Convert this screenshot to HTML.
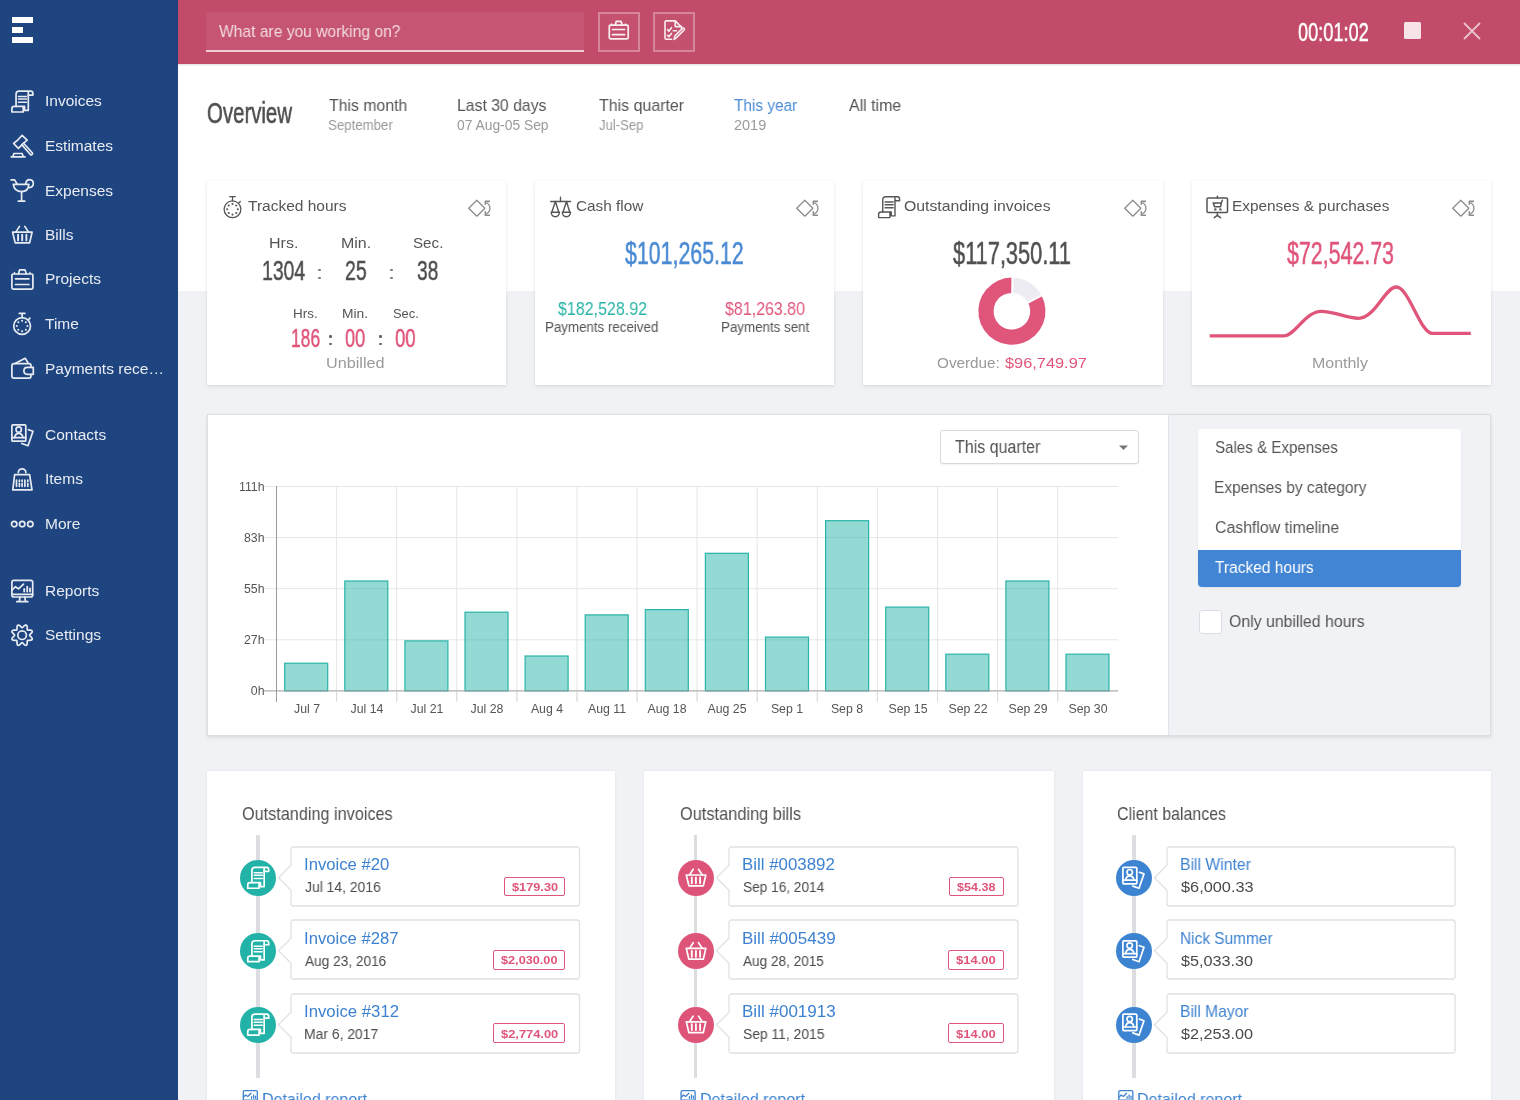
<!DOCTYPE html>
<html><head><meta charset="utf-8">
<style>
*{box-sizing:border-box;margin:0;padding:0}
html,body{width:1520px;height:1100px;overflow:hidden;background:#f1f2f6;font-family:"Liberation Sans",sans-serif}
.a{position:absolute}
.t{position:absolute;line-height:0;white-space:nowrap;transform-origin:0 0;will-change:transform}
svg{position:absolute;overflow:visible}
</style></head><body>
<div class="a" style="left:178px;top:64px;width:1342px;height:227px;background:#fff"></div>
<div class="a" style="left:0px;top:0px;width:178px;height:1100px;background:#1f4580"></div>
<div class="a" style="left:178px;top:0px;width:1342px;height:64px;background:#c24b6a;box-shadow:0 1px 2px rgba(0,0,0,0.15)"></div>
<div class="a" style="left:12px;top:17px;width:21px;height:6px;background:#fff"></div>
<div class="a" style="left:12px;top:27px;width:10.5px;height:6px;background:#fff"></div>
<div class="a" style="left:12px;top:37px;width:21px;height:6px;background:#fff"></div>
<div class="t" style="left:44.5px;top:101px;font-size:15.5px;color:#e8ecf2">Invoices</div>
<div class="t" style="left:44.5px;top:146px;font-size:15.5px;color:#e8ecf2">Estimates</div>
<div class="t" style="left:44.5px;top:191px;font-size:15.5px;color:#e8ecf2">Expenses</div>
<div class="t" style="left:44.5px;top:235px;font-size:15.5px;color:#e8ecf2">Bills</div>
<div class="t" style="left:44.5px;top:279px;font-size:15.5px;color:#e8ecf2">Projects</div>
<div class="t" style="left:44.5px;top:324px;font-size:15.5px;color:#e8ecf2">Time</div>
<div class="t" style="left:44.5px;top:369px;font-size:15.5px;color:#e8ecf2">Payments rece…</div>
<div class="t" style="left:44.5px;top:435px;font-size:15.5px;color:#e8ecf2">Contacts</div>
<div class="t" style="left:44.5px;top:479px;font-size:15.5px;color:#e8ecf2">Items</div>
<div class="t" style="left:44.5px;top:524px;font-size:15.5px;color:#e8ecf2">More</div>
<div class="t" style="left:44.5px;top:591px;font-size:15.5px;color:#e8ecf2">Reports</div>
<div class="t" style="left:44.5px;top:635px;font-size:15.5px;color:#e8ecf2">Settings</div>
<div class="a" style="left:206px;top:12px;width:378px;height:40px;background:rgba(255,255,255,0.06);border-bottom:2px solid rgba(255,255,255,0.7)"></div>
<div class="t" style="left:218.92px;top:32.00px;font-size:16.55px;color:rgba(255,255,255,0.78);transform:scaleX(0.9447);">What are you working on?</div>
<div class="a" style="left:598px;top:12px;width:42px;height:40px;border:2px solid rgba(255,255,255,0.3);background:rgba(255,255,255,0.04)"></div>
<div class="a" style="left:653px;top:12px;width:42px;height:40px;border:2px solid rgba(255,255,255,0.3);background:rgba(255,255,255,0.04)"></div>
<div class="t" style="left:1297.87px;top:32.00px;font-size:25.71px;color:#fff;transform:scaleX(0.7072);-webkit-text-stroke:0.5px currentColor;">00:01:02</div>
<div class="a" style="left:1404px;top:22px;width:17px;height:16.5px;background:#f7e4e9;border-radius:1.5px"></div>
<svg style="left:1463px;top:22px" width="18" height="18"><path d="M1 1L17 17M17 1L1 17" stroke="rgba(255,255,255,0.65)" stroke-width="1.9"/></svg>
<div class="t" style="left:207.38px;top:113.00px;font-size:29.52px;color:#505050;transform:scaleX(0.6907);-webkit-text-stroke:0.6px currentColor;">Overview</div>
<div class="t" style="left:328.68px;top:105.00px;font-size:16.38px;color:#555;transform:scaleX(0.9674);">This month</div>
<div class="t" style="left:328.40px;top:126.00px;font-size:13.71px;color:#9a9a9a;transform:scaleX(0.9662);">September</div>
<div class="t" style="left:456.54px;top:105.00px;font-size:16.38px;color:#555;transform:scaleX(0.9640);">Last 30 days</div>
<div class="t" style="left:457.25px;top:126.00px;font-size:13.71px;color:#9a9a9a;transform:scaleX(1.0098);">07 Aug-05 Sep</div>
<div class="t" style="left:598.68px;top:105.00px;font-size:16.38px;color:#555;transform:scaleX(0.9747);">This quarter</div>
<div class="t" style="left:598.80px;top:125.00px;font-size:13.91px;color:#9a9a9a;transform:scaleX(0.9397);">Jul-Sep</div>
<div class="t" style="left:734.49px;top:105.00px;font-size:16.38px;color:#4a8ad4;transform:scaleX(0.9395);">This year</div>
<div class="t" style="left:734.07px;top:126.00px;font-size:13.71px;color:#9a9a9a;transform:scaleX(1.0578);">2019</div>
<div class="t" style="left:849.00px;top:105.00px;font-size:16.38px;color:#555;transform:scaleX(0.9717);">All time</div>
<div class="a" style="left:206.9px;top:180.8px;width:299.2px;height:204.3px;background:#fff;box-shadow:0 2px 4px rgba(0,0,0,0.08),0 0 2px rgba(0,0,0,0.06)"></div>
<svg style="left:467px;top:199px" width="26" height="20" viewBox="0 0 26 20"><g fill="none" stroke="#8a8a8a" stroke-width="1.25" stroke-linejoin="round"><path d="M1.7 9.2L9.8 1.2L17.9 9.2L9.8 17.2Z"/><path d="M19.3 3.7C23.6 5.6 24.6 12 19.3 15"/><path d="M22.9 2.4H18.4V5.8M22.9 16.3H18.4V12.2" stroke-width="1.6"/></g></svg>
<div class="a" style="left:535.17px;top:180.8px;width:299.2px;height:204.3px;background:#fff;box-shadow:0 2px 4px rgba(0,0,0,0.08),0 0 2px rgba(0,0,0,0.06)"></div>
<svg style="left:795px;top:199px" width="26" height="20" viewBox="0 0 26 20"><g fill="none" stroke="#8a8a8a" stroke-width="1.25" stroke-linejoin="round"><path d="M1.7 9.2L9.8 1.2L17.9 9.2L9.8 17.2Z"/><path d="M19.3 3.7C23.6 5.6 24.6 12 19.3 15"/><path d="M22.9 2.4H18.4V5.8M22.9 16.3H18.4V12.2" stroke-width="1.6"/></g></svg>
<div class="a" style="left:863.4399999999999px;top:180.8px;width:299.2px;height:204.3px;background:#fff;box-shadow:0 2px 4px rgba(0,0,0,0.08),0 0 2px rgba(0,0,0,0.06)"></div>
<svg style="left:1123px;top:199px" width="26" height="20" viewBox="0 0 26 20"><g fill="none" stroke="#8a8a8a" stroke-width="1.25" stroke-linejoin="round"><path d="M1.7 9.2L9.8 1.2L17.9 9.2L9.8 17.2Z"/><path d="M19.3 3.7C23.6 5.6 24.6 12 19.3 15"/><path d="M22.9 2.4H18.4V5.8M22.9 16.3H18.4V12.2" stroke-width="1.6"/></g></svg>
<div class="a" style="left:1191.71px;top:180.8px;width:299.2px;height:204.3px;background:#fff;box-shadow:0 2px 4px rgba(0,0,0,0.08),0 0 2px rgba(0,0,0,0.06)"></div>
<svg style="left:1451px;top:199px" width="26" height="20" viewBox="0 0 26 20"><g fill="none" stroke="#8a8a8a" stroke-width="1.25" stroke-linejoin="round"><path d="M1.7 9.2L9.8 1.2L17.9 9.2L9.8 17.2Z"/><path d="M19.3 3.7C23.6 5.6 24.6 12 19.3 15"/><path d="M22.9 2.4H18.4V5.8M22.9 16.3H18.4V12.2" stroke-width="1.6"/></g></svg>
<div class="t" style="left:248.09px;top:206.00px;font-size:14.48px;color:#555;transform:scaleX(1.0708);">Tracked hours</div>
<div class="t" style="left:576.03px;top:206.00px;font-size:15.00px;color:#555;transform:scaleX(1.0234);">Cash flow</div>
<div class="t" style="left:904.09px;top:206.00px;font-size:15.00px;color:#555;transform:scaleX(1.0523);">Outstanding invoices</div>
<div class="t" style="left:1232.17px;top:206.00px;font-size:15.22px;color:#555;transform:scaleX(1.0109);">Expenses &amp; purchases</div>
<div class="t" style="left:268.52px;top:243.00px;font-size:15.22px;color:#555;transform:scaleX(1.0530);">Hrs.</div>
<div class="t" style="left:340.52px;top:243.00px;font-size:15.22px;color:#555;transform:scaleX(1.0499);">Min.</div>
<div class="t" style="left:412.92px;top:243.00px;font-size:15.00px;color:#555;transform:scaleX(1.0116);">Sec.</div>
<div class="t" style="left:262.15px;top:271.00px;font-size:28.14px;color:#4f4f4f;transform:scaleX(0.6889);-webkit-text-stroke:0.5px currentColor;">1304</div>
<div class="t" style="left:344.73px;top:271.00px;font-size:28.14px;color:#4f4f4f;transform:scaleX(0.6898);-webkit-text-stroke:0.5px currentColor;">25</div>
<div class="t" style="left:417.43px;top:271.00px;font-size:28.14px;color:#4f4f4f;transform:scaleX(0.6796);-webkit-text-stroke:0.5px currentColor;">38</div>
<div class="a" style="left:318.2px;top:268.5px;width:2.6px;height:2.6px;background:#777;border-radius:1px"></div>
<div class="a" style="left:318.2px;top:276.5px;width:2.6px;height:2.6px;background:#777;border-radius:1px"></div>
<div class="a" style="left:390.2px;top:268.5px;width:2.6px;height:2.6px;background:#777;border-radius:1px"></div>
<div class="a" style="left:390.2px;top:276.5px;width:2.6px;height:2.6px;background:#777;border-radius:1px"></div>
<div class="t" style="left:293.13px;top:314.00px;font-size:12.32px;color:#555;transform:scaleX(1.0905);">Hrs.</div>
<div class="t" style="left:342.49px;top:314.00px;font-size:12.32px;color:#555;transform:scaleX(1.1218);">Min.</div>
<div class="t" style="left:392.92px;top:314.00px;font-size:12.14px;color:#555;transform:scaleX(1.0642);">Sec.</div>
<div class="t" style="left:291.19px;top:338.00px;font-size:24.86px;color:#e0557a;transform:scaleX(0.7008);-webkit-text-stroke:0.5px currentColor;">186</div>
<div class="t" style="left:345.37px;top:338.00px;font-size:24.86px;color:#e0557a;transform:scaleX(0.7307);-webkit-text-stroke:0.5px currentColor;">00</div>
<div class="t" style="left:395.26px;top:338.00px;font-size:24.86px;color:#e0557a;transform:scaleX(0.7463);-webkit-text-stroke:0.5px currentColor;">00</div>
<div class="a" style="left:329.0px;top:335px;width:2.6px;height:2.6px;background:#666;border-radius:1px"></div>
<div class="a" style="left:329.0px;top:342.5px;width:2.6px;height:2.6px;background:#666;border-radius:1px"></div>
<div class="a" style="left:379.0px;top:335px;width:2.6px;height:2.6px;background:#666;border-radius:1px"></div>
<div class="a" style="left:379.0px;top:342.5px;width:2.6px;height:2.6px;background:#666;border-radius:1px"></div>
<div class="t" style="left:326.19px;top:363.00px;font-size:14.93px;color:#9a9a9a;transform:scaleX(1.0850);">Unbilled</div>
<div class="t" style="left:624.59px;top:253.00px;font-size:30.43px;color:#4a8ad4;transform:scaleX(0.7015);-webkit-text-stroke:0.5px currentColor;">$101,265.12</div>
<div class="t" style="left:558.14px;top:309.00px;font-size:17.71px;color:#26b3a6;transform:scaleX(0.9053);">$182,528.92</div>
<div class="t" style="left:545.33px;top:328.00px;font-size:13.77px;color:#555;transform:scaleX(0.9678);">Payments received</div>
<div class="t" style="left:725.24px;top:309.00px;font-size:17.71px;color:#e0557a;transform:scaleX(0.9037);">$81,263.80</div>
<div class="t" style="left:720.83px;top:328.00px;font-size:13.77px;color:#555;transform:scaleX(0.9695);">Payments sent</div>
<div class="t" style="left:952.98px;top:253.00px;font-size:30.43px;color:#505050;transform:scaleX(0.7156);-webkit-text-stroke:0.5px currentColor;">$117,350.11</div>
<div class="t" style="left:937.31px;top:363.00px;font-size:14.71px;color:#9a9a9a;transform:scaleX(1.0395);">Overdue:</div>
<div class="t" style="left:1004.54px;top:363.00px;font-size:14.71px;color:#e0557a;transform:scaleX(1.1118);">$96,749.97</div>
<svg style="left:0;top:0" width="1520" height="1100"><path d="M1011.90 277.60A33.6 33.6 0 0 1 1041.57 295.43L1028.06 302.61A18.3 18.3 0 0 0 1011.90 292.90Z" fill="#edecf2"/><path d="M1041.57 295.43A33.6 33.6 0 1 1 1011.90 277.60L1011.90 292.90A18.3 18.3 0 1 0 1028.06 302.61Z" fill="#e0557a"/><path d="M1012.16 296.20L1012.53 275.21" stroke="#fff" stroke-width="2"/><path d="M1025.14 304.16L1043.69 294.30" stroke="#fff" stroke-width="2"/></svg>
<div class="t" style="left:1287.09px;top:253.00px;font-size:30.43px;color:#e0557a;transform:scaleX(0.7030);-webkit-text-stroke:0.5px currentColor;">$72,542.73</div>
<svg style="left:0;top:0" width="1520" height="1100"><path d="M1209.7 335.9L1283.8 335.9C1295 335.9 1305 311.3 1321.3 311.3C1335 311.3 1346 318.3 1358.5 318.3C1375 318.3 1385 287 1396.2 287C1409 287 1420 333.4 1432.5 333.4L1470.8 333.4" fill="none" stroke="#e0557a" stroke-width="3.3"/></svg>
<div class="t" style="left:1311.72px;top:363.00px;font-size:14.93px;color:#9a9a9a;transform:scaleX(1.0695);">Monthly</div>
<div class="a" style="left:207px;top:414px;width:1283.5px;height:322px;background:#fff;box-shadow:0 2px 4px rgba(0,0,0,0.08),0 0 3px rgba(0,0,0,0.05);border:1px solid #dcdfe2"></div>
<div class="a" style="left:1168px;top:415px;width:321.5px;height:320px;background:#f1f2f6;border-left:1px solid #e1e3e8"></div>
<svg style="left:0;top:0" width="1520" height="1100"><path d="M264 486.5H1118" stroke="#e6e6e6" stroke-width="1"/><path d="M264 537.6H1118" stroke="#e6e6e6" stroke-width="1"/><path d="M264 588.7H1118" stroke="#e6e6e6" stroke-width="1"/><path d="M264 639.8H1118" stroke="#e6e6e6" stroke-width="1"/><path d="M336.6 486V701" stroke="#e6e6e6" stroke-width="1"/><path d="M396.7 486V701" stroke="#e6e6e6" stroke-width="1"/><path d="M456.8 486V701" stroke="#e6e6e6" stroke-width="1"/><path d="M516.9 486V701" stroke="#e6e6e6" stroke-width="1"/><path d="M577.0 486V701" stroke="#e6e6e6" stroke-width="1"/><path d="M637.1 486V701" stroke="#e6e6e6" stroke-width="1"/><path d="M697.1 486V701" stroke="#e6e6e6" stroke-width="1"/><path d="M757.2 486V701" stroke="#e6e6e6" stroke-width="1"/><path d="M817.3 486V701" stroke="#e6e6e6" stroke-width="1"/><path d="M877.4 486V701" stroke="#e6e6e6" stroke-width="1"/><path d="M937.5 486V701" stroke="#e6e6e6" stroke-width="1"/><path d="M997.6 486V701" stroke="#e6e6e6" stroke-width="1"/><path d="M1057.7 486V701" stroke="#e6e6e6" stroke-width="1"/><rect x="284.7" y="663.2" width="43" height="27.7" fill="rgba(38,181,168,0.5)" stroke="#2ab4a8" stroke-width="1.2"/><rect x="344.8" y="581.0" width="43" height="109.9" fill="rgba(38,181,168,0.5)" stroke="#2ab4a8" stroke-width="1.2"/><rect x="404.9" y="640.9" width="43" height="50.0" fill="rgba(38,181,168,0.5)" stroke="#2ab4a8" stroke-width="1.2"/><rect x="465.0" y="612.2" width="43" height="78.7" fill="rgba(38,181,168,0.5)" stroke="#2ab4a8" stroke-width="1.2"/><rect x="525.1" y="656.0" width="43" height="34.9" fill="rgba(38,181,168,0.5)" stroke="#2ab4a8" stroke-width="1.2"/><rect x="585.2" y="614.9" width="43" height="76.0" fill="rgba(38,181,168,0.5)" stroke="#2ab4a8" stroke-width="1.2"/><rect x="645.3" y="609.6" width="43" height="81.3" fill="rgba(38,181,168,0.5)" stroke="#2ab4a8" stroke-width="1.2"/><rect x="705.4" y="553.3" width="43" height="137.6" fill="rgba(38,181,168,0.5)" stroke="#2ab4a8" stroke-width="1.2"/><rect x="765.5" y="637.1" width="43" height="53.8" fill="rgba(38,181,168,0.5)" stroke="#2ab4a8" stroke-width="1.2"/><rect x="825.6" y="520.7" width="43" height="170.2" fill="rgba(38,181,168,0.5)" stroke="#2ab4a8" stroke-width="1.2"/><rect x="885.7" y="607.1" width="43" height="83.8" fill="rgba(38,181,168,0.5)" stroke="#2ab4a8" stroke-width="1.2"/><rect x="945.8" y="654.2" width="43" height="36.7" fill="rgba(38,181,168,0.5)" stroke="#2ab4a8" stroke-width="1.2"/><rect x="1005.9" y="581.0" width="43" height="109.9" fill="rgba(38,181,168,0.5)" stroke="#2ab4a8" stroke-width="1.2"/><rect x="1066.0" y="654.2" width="43" height="36.7" fill="rgba(38,181,168,0.5)" stroke="#2ab4a8" stroke-width="1.2"/><path d="M264 690.9H1118" stroke="#9a9a9a" stroke-width="1"/><path d="M276.5 486V702" stroke="#9a9a9a" stroke-width="1"/><path d="M336.6 691V702" stroke="#dadada" stroke-width="1"/><path d="M396.7 691V702" stroke="#dadada" stroke-width="1"/><path d="M456.8 691V702" stroke="#dadada" stroke-width="1"/><path d="M516.9 691V702" stroke="#dadada" stroke-width="1"/><path d="M577.0 691V702" stroke="#dadada" stroke-width="1"/><path d="M637.1 691V702" stroke="#dadada" stroke-width="1"/><path d="M697.1 691V702" stroke="#dadada" stroke-width="1"/><path d="M757.2 691V702" stroke="#dadada" stroke-width="1"/><path d="M817.3 691V702" stroke="#dadada" stroke-width="1"/><path d="M877.4 691V702" stroke="#dadada" stroke-width="1"/><path d="M937.5 691V702" stroke="#dadada" stroke-width="1"/><path d="M997.6 691V702" stroke="#dadada" stroke-width="1"/><path d="M1057.7 691V702" stroke="#dadada" stroke-width="1"/></svg>
<div class="t" style="left:246.5px;width:120px;text-align:center;top:709px;font-size:12.3px;color:#555">Jul 7</div>
<div class="t" style="left:306.6px;width:120px;text-align:center;top:709px;font-size:12.3px;color:#555">Jul 14</div>
<div class="t" style="left:366.7px;width:120px;text-align:center;top:709px;font-size:12.3px;color:#555">Jul 21</div>
<div class="t" style="left:426.8px;width:120px;text-align:center;top:709px;font-size:12.3px;color:#555">Jul 28</div>
<div class="t" style="left:486.9px;width:120px;text-align:center;top:709px;font-size:12.3px;color:#555">Aug 4</div>
<div class="t" style="left:547.0px;width:120px;text-align:center;top:709px;font-size:12.3px;color:#555">Aug 11</div>
<div class="t" style="left:607.1px;width:120px;text-align:center;top:709px;font-size:12.3px;color:#555">Aug 18</div>
<div class="t" style="left:667.2px;width:120px;text-align:center;top:709px;font-size:12.3px;color:#555">Aug 25</div>
<div class="t" style="left:727.3px;width:120px;text-align:center;top:709px;font-size:12.3px;color:#555">Sep 1</div>
<div class="t" style="left:787.4px;width:120px;text-align:center;top:709px;font-size:12.3px;color:#555">Sep 8</div>
<div class="t" style="left:847.5px;width:120px;text-align:center;top:709px;font-size:12.3px;color:#555">Sep 15</div>
<div class="t" style="left:907.6px;width:120px;text-align:center;top:709px;font-size:12.3px;color:#555">Sep 22</div>
<div class="t" style="left:967.7px;width:120px;text-align:center;top:709px;font-size:12.3px;color:#555">Sep 29</div>
<div class="t" style="left:1027.8px;width:120px;text-align:center;top:709px;font-size:12.3px;color:#555">Sep 30</div>
<div class="t" style="left:200px;width:64.5px;text-align:right;top:487px;font-size:12.3px;color:#555">111h</div>
<div class="t" style="left:200px;width:64.5px;text-align:right;top:538px;font-size:12.3px;color:#555">83h</div>
<div class="t" style="left:200px;width:64.5px;text-align:right;top:589px;font-size:12.3px;color:#555">55h</div>
<div class="t" style="left:200px;width:64.5px;text-align:right;top:640px;font-size:12.3px;color:#555">27h</div>
<div class="t" style="left:200px;width:64.5px;text-align:right;top:691px;font-size:12.3px;color:#555">0h</div>
<div class="a" style="left:939.8px;top:429.8px;width:199px;height:34.2px;border:1.5px solid #d9d9d9;border-radius:3px;background:#fff;box-shadow:0 1px 1px rgba(0,0,0,0.05)"></div>
<div class="t" style="left:954.68px;top:447.00px;font-size:18.70px;color:#555;transform:scaleX(0.8558);">This quarter</div>
<svg style="left:1119px;top:445px" width="10" height="6"><path d="M0 0.5L4.5 5L9 0.5Z" fill="#777"/></svg>
<div class="a" style="left:1198px;top:429.2px;width:263px;height:157.6px;background:#fff;border-radius:4px;box-shadow:0 1px 2px rgba(0,0,0,0.08);overflow:hidden"></div>
<div class="a" style="left:1198px;top:549.7px;width:263px;height:37.1px;background:#4285d4;border-radius:0 0 4px 4px"></div>
<div class="t" style="left:1214.82px;top:448.00px;font-size:17.00px;color:#555;transform:scaleX(0.8895);">Sales &amp; Expenses</div>
<div class="t" style="left:1214.26px;top:488.00px;font-size:17.10px;color:#555;transform:scaleX(0.9059);">Expenses by category</div>
<div class="t" style="left:1214.71px;top:528.00px;font-size:16.86px;color:#555;transform:scaleX(0.9404);">Cashflow timeline</div>
<div class="t" style="left:1215.19px;top:568.00px;font-size:17.10px;color:#fff;transform:scaleX(0.9087);">Tracked hours</div>
<div class="a" style="left:1198.7px;top:610px;width:23.6px;height:23.6px;background:#fff;border:1px solid #dcdde2;border-radius:3px"></div>
<div class="t" style="left:1229.29px;top:622.00px;font-size:17.00px;color:#555;transform:scaleX(0.9323);">Only unbilled hours</div>
<div class="a" style="left:207px;top:771px;width:408px;height:340px;background:#fff;box-shadow:0 0 3px rgba(0,0,0,0.07)"></div>
<div class="a" style="left:644px;top:771px;width:410px;height:340px;background:#fff;box-shadow:0 0 3px rgba(0,0,0,0.07)"></div>
<div class="a" style="left:1083px;top:771px;width:408px;height:340px;background:#fff;box-shadow:0 0 3px rgba(0,0,0,0.07)"></div>
<div class="t" style="left:241.87px;top:814.00px;font-size:17.71px;color:#505050;transform:scaleX(0.9175);">Outstanding invoices</div>
<div class="t" style="left:680.06px;top:814.00px;font-size:17.71px;color:#505050;transform:scaleX(0.9253);">Outstanding bills</div>
<div class="t" style="left:1117.20px;top:814.00px;font-size:17.71px;color:#505050;transform:scaleX(0.9017);">Client balances</div>
<div class="a" style="left:256.1px;top:835px;width:3.8px;height:243px;background:#dcdde1"></div>
<svg style="left:275px;top:845.9px" width="306.5" height="62"><path d="M16 3.5Q16 1 18.5 1H302.0Q304.5 1 304.5 3.5V57.5Q304.5 60 302.0 60H18.5Q16 60 16 57.5V44.2L3.5 31.7L16 19.2Z" fill="#fff" stroke="#e0e1e5" stroke-width="1.3"/></svg>
<div class="a" style="left:240.10000000000002px;top:859.7px;width:36px;height:36px;border-radius:50%;background:#22b2a7"></div>
<svg style="left:275px;top:919.3px" width="306.5" height="62"><path d="M16 3.5Q16 1 18.5 1H302.0Q304.5 1 304.5 3.5V57.5Q304.5 60 302.0 60H18.5Q16 60 16 57.5V44.2L3.5 31.7L16 19.2Z" fill="#fff" stroke="#e0e1e5" stroke-width="1.3"/></svg>
<div class="a" style="left:240.10000000000002px;top:933.1px;width:36px;height:36px;border-radius:50%;background:#22b2a7"></div>
<svg style="left:275px;top:992.7px" width="306.5" height="62"><path d="M16 3.5Q16 1 18.5 1H302.0Q304.5 1 304.5 3.5V57.5Q304.5 60 302.0 60H18.5Q16 60 16 57.5V44.2L3.5 31.7L16 19.2Z" fill="#fff" stroke="#e0e1e5" stroke-width="1.3"/></svg>
<div class="a" style="left:240.10000000000002px;top:1006.5px;width:36px;height:36px;border-radius:50%;background:#22b2a7"></div>
<div class="a" style="left:693.6px;top:835px;width:3.8px;height:243px;background:#dcdde1"></div>
<svg style="left:712.6px;top:845.9px" width="306.9" height="62"><path d="M16 3.5Q16 1 18.5 1H302.4Q304.9 1 304.9 3.5V57.5Q304.9 60 302.4 60H18.5Q16 60 16 57.5V44.2L3.5 31.7L16 19.2Z" fill="#fff" stroke="#e0e1e5" stroke-width="1.3"/></svg>
<div class="a" style="left:677.6px;top:859.7px;width:36px;height:36px;border-radius:50%;background:#de5479"></div>
<svg style="left:712.6px;top:919.3px" width="306.9" height="62"><path d="M16 3.5Q16 1 18.5 1H302.4Q304.9 1 304.9 3.5V57.5Q304.9 60 302.4 60H18.5Q16 60 16 57.5V44.2L3.5 31.7L16 19.2Z" fill="#fff" stroke="#e0e1e5" stroke-width="1.3"/></svg>
<div class="a" style="left:677.6px;top:933.1px;width:36px;height:36px;border-radius:50%;background:#de5479"></div>
<svg style="left:712.6px;top:992.7px" width="306.9" height="62"><path d="M16 3.5Q16 1 18.5 1H302.4Q304.9 1 304.9 3.5V57.5Q304.9 60 302.4 60H18.5Q16 60 16 57.5V44.2L3.5 31.7L16 19.2Z" fill="#fff" stroke="#e0e1e5" stroke-width="1.3"/></svg>
<div class="a" style="left:677.6px;top:1006.5px;width:36px;height:36px;border-radius:50%;background:#de5479"></div>
<div class="a" style="left:1132px;top:835px;width:3.8px;height:243px;background:#dcdde1"></div>
<svg style="left:1150.6px;top:845.9px" width="306.10000000000014" height="62"><path d="M16 3.5Q16 1 18.5 1H301.60000000000014Q304.10000000000014 1 304.10000000000014 3.5V57.5Q304.10000000000014 60 301.60000000000014 60H18.5Q16 60 16 57.5V44.2L3.5 31.7L16 19.2Z" fill="#fff" stroke="#e0e1e5" stroke-width="1.3"/></svg>
<div class="a" style="left:1116px;top:859.7px;width:36px;height:36px;border-radius:50%;background:#3c84d2"></div>
<svg style="left:1150.6px;top:919.3px" width="306.10000000000014" height="62"><path d="M16 3.5Q16 1 18.5 1H301.60000000000014Q304.10000000000014 1 304.10000000000014 3.5V57.5Q304.10000000000014 60 301.60000000000014 60H18.5Q16 60 16 57.5V44.2L3.5 31.7L16 19.2Z" fill="#fff" stroke="#e0e1e5" stroke-width="1.3"/></svg>
<div class="a" style="left:1116px;top:933.1px;width:36px;height:36px;border-radius:50%;background:#3c84d2"></div>
<svg style="left:1150.6px;top:992.7px" width="306.10000000000014" height="62"><path d="M16 3.5Q16 1 18.5 1H301.60000000000014Q304.10000000000014 1 304.10000000000014 3.5V57.5Q304.10000000000014 60 301.60000000000014 60H18.5Q16 60 16 57.5V44.2L3.5 31.7L16 19.2Z" fill="#fff" stroke="#e0e1e5" stroke-width="1.3"/></svg>
<div class="a" style="left:1116px;top:1006.5px;width:36px;height:36px;border-radius:50%;background:#3c84d2"></div>
<div class="t" style="left:303.90px;top:864.00px;font-size:16.38px;color:#3d82d0;transform:scaleX(1.0193);">Invoice #20</div>
<div class="t" style="left:305.19px;top:887.00px;font-size:14.35px;color:#4a4a4a;transform:scaleX(0.9689);">Jul 14, 2016</div>
<div class="a" style="left:504.1px;top:876.6px;width:60.60000000000002px;height:19.7px;border:1.3px solid #e0557a;border-radius:2px"></div>
<div class="t" style="left:511.81px;top:887.00px;font-size:11.57px;color:#e0557a;font-weight:bold;transform:scaleX(1.1021);">$179.30</div>
<div class="t" style="left:303.90px;top:938.00px;font-size:16.38px;color:#3d82d0;transform:scaleX(1.0181);">Invoice #287</div>
<div class="t" style="left:305.40px;top:961.00px;font-size:14.35px;color:#4a4a4a;transform:scaleX(0.9517);">Aug 23, 2016</div>
<div class="a" style="left:493.3px;top:950.0px;width:71.40000000000003px;height:19.7px;border:1.3px solid #e0557a;border-radius:2px"></div>
<div class="t" style="left:501.41px;top:960.00px;font-size:11.57px;color:#e0557a;font-weight:bold;transform:scaleX(1.0972);">$2,030.00</div>
<div class="t" style="left:303.89px;top:1011.00px;font-size:16.38px;color:#3d82d0;transform:scaleX(1.0247);">Invoice #312</div>
<div class="t" style="left:304.29px;top:1034.00px;font-size:14.35px;color:#4a4a4a;transform:scaleX(0.9695);">Mar 6, 2017</div>
<div class="a" style="left:493.3px;top:1023.4000000000001px;width:71.40000000000003px;height:19.7px;border:1.3px solid #e0557a;border-radius:2px"></div>
<div class="t" style="left:500.61px;top:1034.00px;font-size:11.57px;color:#e0557a;font-weight:bold;transform:scaleX(1.1129);">$2,774.00</div>
<div class="t" style="left:742.05px;top:864.00px;font-size:16.38px;color:#3d82d0;transform:scaleX(1.0315);">Bill #003892</div>
<div class="t" style="left:742.78px;top:887.00px;font-size:14.14px;color:#4a4a4a;transform:scaleX(0.9664);">Sep 16, 2014</div>
<div class="a" style="left:949px;top:876.6px;width:54.700000000000045px;height:19.7px;border:1.3px solid #e0557a;border-radius:2px"></div>
<div class="t" style="left:957.31px;top:887.00px;font-size:11.57px;color:#e0557a;font-weight:bold;transform:scaleX(1.0863);">$54.38</div>
<div class="t" style="left:742.04px;top:938.00px;font-size:16.38px;color:#3d82d0;transform:scaleX(1.0396);">Bill #005439</div>
<div class="t" style="left:743.40px;top:961.00px;font-size:14.35px;color:#4a4a4a;transform:scaleX(0.9470);">Aug 28, 2015</div>
<div class="a" style="left:948px;top:950.0px;width:55.700000000000045px;height:19.7px;border:1.3px solid #e0557a;border-radius:2px"></div>
<div class="t" style="left:956.10px;top:960.00px;font-size:11.57px;color:#e0557a;font-weight:bold;transform:scaleX(1.1245);">$14.00</div>
<div class="t" style="left:742.04px;top:1011.00px;font-size:16.38px;color:#3d82d0;transform:scaleX(1.0409);">Bill #001913</div>
<div class="t" style="left:742.78px;top:1034.00px;font-size:14.14px;color:#4a4a4a;transform:scaleX(0.9806);">Sep 11, 2015</div>
<div class="a" style="left:948px;top:1023.4000000000001px;width:55.700000000000045px;height:19.7px;border:1.3px solid #e0557a;border-radius:2px"></div>
<div class="t" style="left:956.10px;top:1034.00px;font-size:11.57px;color:#e0557a;font-weight:bold;transform:scaleX(1.1245);">$14.00</div>
<div class="t" style="left:1180.14px;top:864.00px;font-size:16.38px;color:#3d82d0;transform:scaleX(0.9634);">Bill Winter</div>
<div class="t" style="left:1181.24px;top:887.00px;font-size:15.29px;color:#4a4a4a;transform:scaleX(1.0675);">$6,000.33</div>
<div class="t" style="left:1180.16px;top:938.00px;font-size:16.38px;color:#3d82d0;transform:scaleX(0.9431);">Nick Summer</div>
<div class="t" style="left:1181.24px;top:961.00px;font-size:15.29px;color:#4a4a4a;transform:scaleX(1.0604);">$5,033.30</div>
<div class="t" style="left:1180.15px;top:1011.00px;font-size:16.38px;color:#3d82d0;transform:scaleX(0.9551);">Bill Mayor</div>
<div class="t" style="left:1181.24px;top:1034.00px;font-size:15.29px;color:#4a4a4a;transform:scaleX(1.0604);">$2,253.00</div>
<div class="t" style="left:261.82px;top:1099.00px;font-size:16.38px;color:#3d82d0;transform:scaleX(0.9787);">Detailed report</div>
<div class="t" style="left:699.72px;top:1099.00px;font-size:16.38px;color:#3d82d0;transform:scaleX(0.9787);">Detailed report</div>
<div class="t" style="left:1137.32px;top:1099.00px;font-size:16.38px;color:#3d82d0;transform:scaleX(0.9787);">Detailed report</div>
<svg style="left:0;top:0" width="1520" height="1100"><g transform="translate(6 84) scale(1)" style="color:#e8ecf2" fill="none" stroke="#e8ecf2" stroke-width="1.70" stroke-linecap="round" stroke-linejoin="round"><path d="M10.05 22.4V10.3Q10.05 7.1 13.2 7.1H24.8Q26.9 7.1 26.9 9.6V11.1H22.3"/><path d="M22.3 8V26.3H18.6V22.4H8.2Q5.9 22.4 5.9 24.7V28H17.2V22.6"/><path d="M12.4 12.5H20.4M12.4 15.1H20.4M12.4 18.2H20.4" stroke-width="1.5"/></g><g transform="translate(6 128) scale(1)" style="color:#e8ecf2" fill="none" stroke="#e8ecf2" stroke-width="1.70" stroke-linecap="round" stroke-linejoin="round"><path d="M16.1 7.3L21.2 12.2L17.6 15.2L12.4 20.3L7.6 15.5L11.6 12.2Z"/><path d="M15.7 16.6L24.4 26.5Q25.3 27.3 26.2 26.4Q27 25.5 26.2 24.7L17.6 15.2"/><path d="M5.2 28.8H19M7 28.6L7.9 25.5H16.1L17.2 28.6"/></g><g transform="translate(6 172) scale(1)" style="color:#e8ecf2" fill="none" stroke="#e8ecf2" stroke-width="1.70" stroke-linecap="round" stroke-linejoin="round"><path d="M7.3 12.4H22.9Q22.3 19.6 15.6 19.7Q8.3 19.6 7.3 12.4Z"/><path d="M15.6 19.7V29.1M12.3 29.1H18.8"/><path d="M5.1 7.9H8.6L11.2 12.3"/><path d="M19.6 12.2Q20.2 7.6 23.5 7.6Q27.3 7.8 27.3 11.5Q27.2 15.1 23.4 15.6"/></g><g transform="translate(6 216) scale(1)" style="color:#e8ecf2" fill="none" stroke="#e8ecf2" stroke-width="1.70" stroke-linecap="round" stroke-linejoin="round"><path d="M6.6 16.1H26.1L23.6 26.9H9.2Z" stroke-linejoin="round"/><path d="M9.8 16.1L13.5 10.4M22.6 16.1L18.8 10.4"/><path d="M12.1 18.6V24.4M16.2 18.6V24.4M20.4 18.6V24.4" stroke-width="1.9"/></g><g transform="translate(6 261) scale(1)" style="color:#e8ecf2" fill="none" stroke="#e8ecf2" stroke-width="1.70" stroke-linecap="round" stroke-linejoin="round"><rect x="5.9" y="13" width="21" height="15.1" rx="1.3"/><path d="M12.4 13L13.6 8.8H19L20.4 13"/><path d="M9.5 17.8H22.9M9.5 23.5H22.9"/><path d="M8.5 12.6V11.5M23.9 12.6V11.5" stroke-width="1.4"/></g><g transform="translate(6 305) scale(1)" style="color:#e8ecf2" fill="none" stroke="#e8ecf2" stroke-width="1.70" stroke-linecap="round" stroke-linejoin="round"><circle cx="16.1" cy="21" r="8.4"/><path d="M16.1 12.6V8.5M13.3 8.4H18.9M22.3 14.8L23.9 13.2"/><circle cx="16.10" cy="15.70" r="1.05" fill="currentColor" stroke="none"/><circle cx="19.85" cy="17.25" r="1.05" fill="currentColor" stroke="none"/><circle cx="21.40" cy="21.00" r="1.05" fill="currentColor" stroke="none"/><circle cx="19.85" cy="24.75" r="1.05" fill="currentColor" stroke="none"/><circle cx="16.10" cy="26.30" r="1.05" fill="currentColor" stroke="none"/><circle cx="12.35" cy="24.75" r="1.05" fill="currentColor" stroke="none"/><circle cx="10.80" cy="21.00" r="1.05" fill="currentColor" stroke="none"/><circle cx="12.35" cy="17.25" r="1.05" fill="currentColor" stroke="none"/></g><g transform="translate(6 350) scale(1)" style="color:#e8ecf2" fill="none" stroke="#e8ecf2" stroke-width="1.70" stroke-linecap="round" stroke-linejoin="round"><path d="M25 17.3V15.6Q25 13.6 23 13.6H8Q5.9 13.6 5.9 15.7V26Q5.9 28.1 8 28.1H23Q25 28.1 25 26V24.3"/><path d="M27.3 17.3H21.3Q17.9 17.3 17.9 20.8Q17.9 24.3 21.3 24.3H27.3Z"/><path d="M9 13.5L19.2 8.3L22.4 13.4"/></g><g transform="translate(6 416) scale(1)" style="color:#e8ecf2" fill="none" stroke="#e8ecf2" stroke-width="1.70" stroke-linecap="round" stroke-linejoin="round"><rect x="5.9" y="8.8" width="13.9" height="16.4" rx="1"/><path d="M5.9 21.6H19.8"/><circle cx="12.7" cy="13.6" r="2.7"/><path d="M8.6 21.6Q9.2 17.3 12.7 17.3Q16.3 17.3 16.9 21.6"/><path d="M22.4 13.7L27 15.3L22 29.7L15.8 27.5"/></g><g transform="translate(6 461) scale(1)" style="color:#e8ecf2" fill="none" stroke="#e8ecf2" stroke-width="1.70" stroke-linecap="round" stroke-linejoin="round"><path d="M12.3 11.6A3.8 3.8 0 0 1 19.9 11.6"/><path d="M8.6 13.6H23.6L26 28.9H6.8Z" stroke-linejoin="round"/><path d="M10.5 19.2V25.3M13.4 19.2V20.6M13.4 22.5V25.3M16.1 19.2V20.6M16.1 22.5V25.3M18.9 19.2V25.3M21.8 19.2V20.6M21.8 22.5V25.3" stroke-width="1.7"/></g><g transform="translate(6 506) scale(1)" style="color:#e8ecf2" fill="none" stroke="#e8ecf2" stroke-width="1.70" stroke-linecap="round" stroke-linejoin="round"><circle cx="8.2" cy="18.1" r="2.7"/><circle cx="16.2" cy="18.1" r="2.7"/><circle cx="24.3" cy="18.1" r="2.7"/></g><g transform="translate(6 572) scale(1)" style="color:#e8ecf2" fill="none" stroke="#e8ecf2" stroke-width="1.70" stroke-linecap="round" stroke-linejoin="round"><rect x="5.9" y="8.3" width="20.8" height="16.7" rx="2"/><path d="M5.9 22.3H26.7"/><path d="M14 25L13.3 29.5M18.8 25L19.5 29.5M10.8 29.7H21.8"/><path d="M6.5 17.8L9.3 14.7L12.5 16.8L17.5 12.2"/><path d="M18.2 17V19.6M21.2 14.6V19.6M24 16.3V19.6" stroke-width="1.8"/></g><g transform="translate(6 617) scale(1)" style="color:#e8ecf2" fill="none" stroke="#e8ecf2" stroke-width="1.70" stroke-linecap="round" stroke-linejoin="round"><path d="M16.10 10.70 L16.61 10.49 L17.19 9.92 L17.89 9.18 L18.70 8.49 L19.53 8.09 L20.27 8.13 L20.82 8.63 L21.12 9.50 L21.21 10.55 L21.18 11.58 L21.20 12.39 L21.40 12.90 L21.91 13.10 L22.72 13.12 L23.75 13.09 L24.80 13.17 L25.67 13.48 L26.17 14.03 L26.21 14.77 L25.81 15.60 L25.12 16.41 L24.38 17.11 L23.81 17.69 L23.60 18.20 L23.81 18.71 L24.38 19.29 L25.12 19.99 L25.81 20.80 L26.21 21.63 L26.17 22.37 L25.67 22.92 L24.80 23.22 L23.75 23.31 L22.72 23.28 L21.91 23.30 L21.40 23.50 L21.20 24.01 L21.18 24.82 L21.21 25.85 L21.12 26.90 L20.82 27.77 L20.27 28.27 L19.53 28.31 L18.70 27.91 L17.89 27.22 L17.19 26.48 L16.61 25.91 L16.10 25.70 L15.59 25.91 L15.01 26.48 L14.31 27.22 L13.50 27.91 L12.67 28.31 L11.93 28.27 L11.38 27.77 L11.08 26.90 L10.99 25.85 L11.02 24.82 L11.00 24.01 L10.80 23.50 L10.29 23.30 L9.48 23.28 L8.45 23.31 L7.40 23.23 L6.53 22.92 L6.03 22.37 L5.99 21.63 L6.39 20.80 L7.08 19.99 L7.82 19.29 L8.39 18.71 L8.60 18.20 L8.39 17.69 L7.82 17.11 L7.08 16.41 L6.39 15.60 L5.99 14.77 L6.03 14.03 L6.53 13.48 L7.40 13.18 L8.45 13.09 L9.48 13.12 L10.29 13.10 L10.80 12.90 L11.00 12.39 L11.02 11.58 L10.99 10.55 L11.07 9.50 L11.38 8.63 L11.93 8.13 L12.67 8.09 L13.50 8.49 L14.31 9.18 L15.01 9.92 L15.59 10.49 L16.10 10.70Z"/><circle cx="16.1" cy="18.2" r="4.3"/></g><g transform="translate(604 13.5) scale(0.9)" style="color:#fbeef2" fill="none" stroke="#fbeef2" stroke-width="1.89" stroke-linecap="round" stroke-linejoin="round"><rect x="5.9" y="13" width="21" height="15.1" rx="1.3"/><path d="M12.4 13L13.6 8.8H19L20.4 13"/><path d="M9.5 17.8H22.9M9.5 23.5H22.9"/><path d="M8.5 12.6V11.5M23.9 12.6V11.5" stroke-width="1.4"/></g><g transform="translate(659 16) scale(1)" style="color:#fbeef2" fill="none" stroke="#fbeef2" stroke-width="1.60" stroke-linecap="round" stroke-linejoin="round"><path d="M12.6 23.3H7.3Q6 23.3 6 22V6.2Q6 4.9 7.3 4.9H16.3L22.6 11.2V12.4"/><path d="M16.2 5V10.6H22.5"/><path d="M8.5 13.6L9.9 15.3L12.5 11.6M8.5 19.3L9.9 20.6L12.5 17.4M14.3 14.7H17.6"/><path d="M15.2 23.4L15.8 20L23.4 12.4Q24.3 11.6 25.1 12.4Q25.9 13.2 25.1 14L17.5 21.6Z" stroke-linejoin="round"/></g><g transform="translate(216.4 188.3) scale(1)" style="color:#555" fill="none" stroke="#555" stroke-width="1.30" stroke-linecap="round" stroke-linejoin="round"><circle cx="16.1" cy="21" r="8.4"/><path d="M16.1 12.6V8.5M13.3 8.4H18.9M22.3 14.8L23.9 13.2"/><circle cx="16.10" cy="15.70" r="1.05" fill="currentColor" stroke="none"/><circle cx="19.85" cy="17.25" r="1.05" fill="currentColor" stroke="none"/><circle cx="21.40" cy="21.00" r="1.05" fill="currentColor" stroke="none"/><circle cx="19.85" cy="24.75" r="1.05" fill="currentColor" stroke="none"/><circle cx="16.10" cy="26.30" r="1.05" fill="currentColor" stroke="none"/><circle cx="12.35" cy="24.75" r="1.05" fill="currentColor" stroke="none"/><circle cx="10.80" cy="21.00" r="1.05" fill="currentColor" stroke="none"/><circle cx="12.35" cy="17.25" r="1.05" fill="currentColor" stroke="none"/></g><g transform="translate(545 192) scale(1)" style="color:#555" fill="none" stroke="#555" stroke-width="1.40" stroke-linecap="round" stroke-linejoin="round"><path d="M15.5 5.3V9.5M5.7 9.5H25.5"/><path d="M6.8 20.3L10.4 9.5L13.8 20.3M18 20.3L21.5 9.5L24.8 20.3"/><path d="M6.2 20.3H14.4Q14.2 24.7 10.3 24.7Q6.4 24.7 6.2 20.3ZM17.3 20.3H25.5Q25.3 24.7 21.4 24.7Q17.5 24.7 17.3 20.3Z"/></g><g transform="translate(872.7 189.6) scale(1)" style="color:#555" fill="none" stroke="#555" stroke-width="1.40" stroke-linecap="round" stroke-linejoin="round"><path d="M10.05 22.4V10.3Q10.05 7.1 13.2 7.1H24.8Q26.9 7.1 26.9 9.6V11.1H22.3"/><path d="M22.3 8V26.3H18.6V22.4H8.2Q5.9 22.4 5.9 24.7V28H17.2V22.6"/><path d="M12.4 12.5H20.4M12.4 15.1H20.4M12.4 18.2H20.4" stroke-width="1.5"/></g><g transform="translate(1202 192) scale(1)" style="color:#555" fill="none" stroke="#555" stroke-width="1.50" stroke-linecap="round" stroke-linejoin="round"><rect x="5" y="6" width="20.5" height="14.5" rx="1"/><path d="M15.4 4.3V6M15.4 20.5V23.4L12.3 25.6M15.4 23.4L18.5 25.6"/><path d="M20.4 8.2L19.2 11M11.2 10.9H19.4L18.6 14.7H12.6Z" stroke-linejoin="round"/><circle cx="13.3" cy="17.4" r="1.2" fill="currentColor" stroke="none"/><circle cx="18.4" cy="17.4" r="1.2" fill="currentColor" stroke="none"/></g><g transform="translate(241.85 860.25) scale(1)" style="color:#fff" fill="none" stroke="#fff" stroke-width="1.70" stroke-linecap="round" stroke-linejoin="round"><path d="M10.05 22.4V10.3Q10.05 7.1 13.2 7.1H24.8Q26.9 7.1 26.9 9.6V11.1H22.3"/><path d="M22.3 8V26.3H18.6V22.4H8.2Q5.9 22.4 5.9 24.7V28H17.2V22.6"/><path d="M12.4 12.5H20.4M12.4 15.1H20.4M12.4 18.2H20.4" stroke-width="1.5"/></g><g transform="translate(679.7 858.9) scale(1)" style="color:#fff" fill="none" stroke="#fff" stroke-width="1.70" stroke-linecap="round" stroke-linejoin="round"><path d="M6.6 16.1H26.1L23.6 26.9H9.2Z" stroke-linejoin="round"/><path d="M9.8 16.1L13.5 10.4M22.6 16.1L18.8 10.4"/><path d="M12.1 18.6V24.4M16.2 18.6V24.4M20.4 18.6V24.4" stroke-width="1.9"/></g><g transform="translate(1117 858.6) scale(1)" style="color:#fff" fill="none" stroke="#fff" stroke-width="1.70" stroke-linecap="round" stroke-linejoin="round"><rect x="5.9" y="8.8" width="13.9" height="16.4" rx="1"/><path d="M5.9 21.6H19.8"/><circle cx="12.7" cy="13.6" r="2.7"/><path d="M8.6 21.6Q9.2 17.3 12.7 17.3Q16.3 17.3 16.9 21.6"/><path d="M22.4 13.7L27 15.3L22 29.7L15.8 27.5"/></g><g transform="translate(241.85 933.65) scale(1)" style="color:#fff" fill="none" stroke="#fff" stroke-width="1.70" stroke-linecap="round" stroke-linejoin="round"><path d="M10.05 22.4V10.3Q10.05 7.1 13.2 7.1H24.8Q26.9 7.1 26.9 9.6V11.1H22.3"/><path d="M22.3 8V26.3H18.6V22.4H8.2Q5.9 22.4 5.9 24.7V28H17.2V22.6"/><path d="M12.4 12.5H20.4M12.4 15.1H20.4M12.4 18.2H20.4" stroke-width="1.5"/></g><g transform="translate(679.7 932.3) scale(1)" style="color:#fff" fill="none" stroke="#fff" stroke-width="1.70" stroke-linecap="round" stroke-linejoin="round"><path d="M6.6 16.1H26.1L23.6 26.9H9.2Z" stroke-linejoin="round"/><path d="M9.8 16.1L13.5 10.4M22.6 16.1L18.8 10.4"/><path d="M12.1 18.6V24.4M16.2 18.6V24.4M20.4 18.6V24.4" stroke-width="1.9"/></g><g transform="translate(1117 932.0) scale(1)" style="color:#fff" fill="none" stroke="#fff" stroke-width="1.70" stroke-linecap="round" stroke-linejoin="round"><rect x="5.9" y="8.8" width="13.9" height="16.4" rx="1"/><path d="M5.9 21.6H19.8"/><circle cx="12.7" cy="13.6" r="2.7"/><path d="M8.6 21.6Q9.2 17.3 12.7 17.3Q16.3 17.3 16.9 21.6"/><path d="M22.4 13.7L27 15.3L22 29.7L15.8 27.5"/></g><g transform="translate(241.85 1007.05) scale(1)" style="color:#fff" fill="none" stroke="#fff" stroke-width="1.70" stroke-linecap="round" stroke-linejoin="round"><path d="M10.05 22.4V10.3Q10.05 7.1 13.2 7.1H24.8Q26.9 7.1 26.9 9.6V11.1H22.3"/><path d="M22.3 8V26.3H18.6V22.4H8.2Q5.9 22.4 5.9 24.7V28H17.2V22.6"/><path d="M12.4 12.5H20.4M12.4 15.1H20.4M12.4 18.2H20.4" stroke-width="1.5"/></g><g transform="translate(679.7 1005.7) scale(1)" style="color:#fff" fill="none" stroke="#fff" stroke-width="1.70" stroke-linecap="round" stroke-linejoin="round"><path d="M6.6 16.1H26.1L23.6 26.9H9.2Z" stroke-linejoin="round"/><path d="M9.8 16.1L13.5 10.4M22.6 16.1L18.8 10.4"/><path d="M12.1 18.6V24.4M16.2 18.6V24.4M20.4 18.6V24.4" stroke-width="1.9"/></g><g transform="translate(1117 1005.4000000000001) scale(1)" style="color:#fff" fill="none" stroke="#fff" stroke-width="1.70" stroke-linecap="round" stroke-linejoin="round"><rect x="5.9" y="8.8" width="13.9" height="16.4" rx="1"/><path d="M5.9 21.6H19.8"/><circle cx="12.7" cy="13.6" r="2.7"/><path d="M8.6 21.6Q9.2 17.3 12.7 17.3Q16.3 17.3 16.9 21.6"/><path d="M22.4 13.7L27 15.3L22 29.7L15.8 27.5"/></g><g transform="translate(239.3 1085.1) scale(0.675)" style="color:#3d82d0" fill="none" stroke="#3d82d0" stroke-width="1.93" stroke-linecap="round" stroke-linejoin="round"><rect x="5.9" y="8.3" width="20.8" height="16.7" rx="2"/><path d="M5.9 22.3H26.7"/><path d="M14 25L13.3 29.5M18.8 25L19.5 29.5M10.8 29.7H21.8"/><path d="M6.5 17.8L9.3 14.7L12.5 16.8L17.5 12.2"/><path d="M18.2 17V19.6M21.2 14.6V19.6M24 16.3V19.6" stroke-width="1.8"/></g><g transform="translate(677.1 1085.1) scale(0.675)" style="color:#3d82d0" fill="none" stroke="#3d82d0" stroke-width="1.93" stroke-linecap="round" stroke-linejoin="round"><rect x="5.9" y="8.3" width="20.8" height="16.7" rx="2"/><path d="M5.9 22.3H26.7"/><path d="M14 25L13.3 29.5M18.8 25L19.5 29.5M10.8 29.7H21.8"/><path d="M6.5 17.8L9.3 14.7L12.5 16.8L17.5 12.2"/><path d="M18.2 17V19.6M21.2 14.6V19.6M24 16.3V19.6" stroke-width="1.8"/></g><g transform="translate(1114.8 1085.1) scale(0.675)" style="color:#3d82d0" fill="none" stroke="#3d82d0" stroke-width="1.93" stroke-linecap="round" stroke-linejoin="round"><rect x="5.9" y="8.3" width="20.8" height="16.7" rx="2"/><path d="M5.9 22.3H26.7"/><path d="M14 25L13.3 29.5M18.8 25L19.5 29.5M10.8 29.7H21.8"/><path d="M6.5 17.8L9.3 14.7L12.5 16.8L17.5 12.2"/><path d="M18.2 17V19.6M21.2 14.6V19.6M24 16.3V19.6" stroke-width="1.8"/></g></svg>
</body></html>
